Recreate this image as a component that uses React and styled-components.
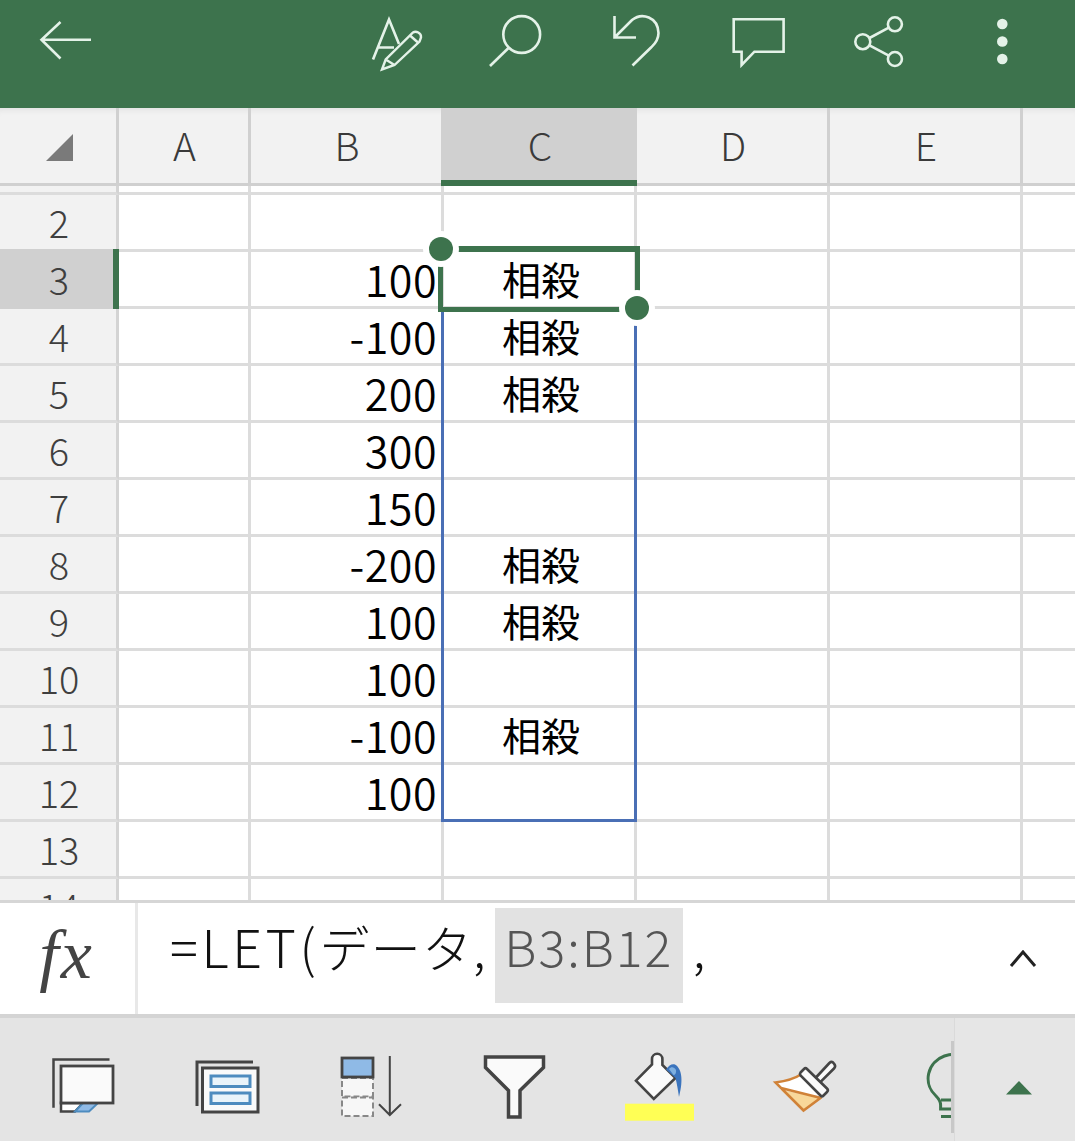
import React from "react";
import styled, { createGlobalStyle } from "styled-components";

const GREEN = "#3d734d";
const MINT = "#e4f2e8";
const INK = "#444";
const CJK = '"Noto Sans CJK JP", "Noto Sans", sans-serif';
const COLS = "119px 132px 193px 193px 193px 193px 52px";

const Global = createGlobalStyle`
  html, body { margin: 0; padding: 0; background: #fff; overflow: hidden; }
  * { box-sizing: border-box; }
`;
const Page = styled.div`
  width: 1075px; height: 1141px; display: flex; flex-direction: column;
  overflow: hidden; font-family: ${CJK};
`;
const TopBar = styled.header`
  height: 108px; flex: none; background: ${GREEN};
  display: flex; align-items: stretch; padding: 0 13px 0 6px;
`;
const TopGroup = styled.div`display: flex; margin-left: auto;`;
const TopIcon = styled.svg`
  display: block; width: 121px; height: 108px; flex: none;
  fill: none; stroke: ${MINT}; stroke-width: 2.6;
`;
const Sheet = styled.main`
  position: relative; flex: 1; min-height: 0; overflow: hidden; background: #fff;
`;
const HeaderRow = styled.div`
  display: grid; grid-template-columns: ${COLS}; height: 78px;
  background: #f2f2f2; box-shadow: inset 0 7px 6px -5px rgba(0,0,0,.07);
`;
const HeaderCell = styled.div`
  position: relative; display: flex; align-items: center; justify-content: center;
  padding: 0 0 4px 2px; font-size: 39px; font-weight: 300; color: #3a3a3a;
  border-bottom: 3px solid #d0d0d0;
  border-right: ${(p) => (p.$last ? "none" : "3px solid #d0d0d0")};
  background: ${(p) => (p.$active ? "#d0d0d0" : "transparent")};
  &::after {
    content: ""; display: ${(p) => (p.$active ? "block" : "none")};
    position: absolute; left: -3px; right: -3px; bottom: -3px; height: 6px; background: ${GREEN};
  }
`;
const Corner = styled.svg`display: block; width: 28px; height: 28px; margin: 8px 0 0 2px;`;
const Row = styled.div`
  display: grid; grid-template-columns: ${COLS}; height: ${(p) => (p.$sliver ? "9px" : "57px")};
`;
const RowHead = styled.div`
  position: relative; display: flex; align-items: center; justify-content: center;
  padding: 0 0 0 2px; font-size: 38px; font-weight: 300; color: #3f3f3f; line-height: 1;
  background: ${(p) => (p.$active ? "#d0d0d0" : "#f2f2f2")};
  border-right: 3px solid #d4d4d4;
  border-bottom: 3px solid ${(p) => (p.$active ? "#d0d0d0" : "#dcdcdc")};
  ${(p) => p.$active && `
    box-shadow: 0 -3px 0 #d0d0d0;
    &::after { content: ""; position: absolute; right: -3px; top: -3px; bottom: -3px; width: 6px; background: ${GREEN}; }
  `}
`;
const Cell = styled.div`
  display: flex; align-items: center; padding-bottom: 2px; line-height: 1; color: #000;
  justify-content: ${(p) => (p.$center ? "center" : "flex-end")};
  padding-right: ${(p) => (p.$center ? "0" : "4px")};
  padding-left: ${(p) => (p.$center ? "4px" : "0")};
  font-size: ${(p) => (p.$center ? "39px" : "43px")};
  letter-spacing: ${(p) => (p.$center ? "0" : "0.5px")};
  font-weight: ${(p) => (p.$center ? 400 : 350)};
  border-bottom: 3px solid #dcdcdc;
  border-right: ${(p) => (p.$last ? "none" : "3px solid #dcdcdc")};
`;
const RangeBox = styled.div`
  position: absolute; left: 441px; top: 199px; width: 196px; height: 515px;
  border: 3px solid #4a6fb5; border-top: none;
`;
const ActiveBox = styled.div`
  position: absolute; left: 438px; top: 138px; width: 202px; height: 66px;
  border: 5px solid ${GREEN}; border-top-width: 6px;
`;
const Handle = styled.div`
  position: absolute; left: ${(p) => p.$x}px; top: ${(p) => p.$y}px; width: 24px; height: 24px;
  border-radius: 50%; background: ${GREEN}; box-shadow: 0 0 0 6px #fff;
`;
const FormulaBar = styled.section`
  height: 118px; flex: none; display: flex; background: #fff;
  border-top: 3px solid #d6d6d6; border-bottom: 4px solid #d4d4d4;
`;
const FxBox = styled.div`
  width: 138px; flex: none; display: flex; align-items: center; justify-content: center;
  border-right: 3px solid #e8e8e8; padding: 0 2px 8px 0;
  font-family: "Liberation Serif", serif; font-style: italic; font-size: 70px; color: #444;
  line-height: 1; letter-spacing: 2px;
`;
const Formula = styled.div`
  flex: 1; display: flex; align-items: center; padding-left: 32px;
  font-size: 50px; font-weight: 300; color: #111; white-space: pre;
`;
const Run = styled.span`
  line-height: 1; margin-top: -25px; letter-spacing: ${(p) => p.$spacing || 0}px;
  font-size: ${(p) => p.$size || 50}px;
`;
const Ref = styled.span`
  display: flex; align-items: center; justify-content: center; width: 188px; height: 95px;
  margin: -6px 10px 0 8px; padding-bottom: 22px; line-height: 1;
  background: #e2e2e2; color: #555; letter-spacing: 2px;
`;
const Chevron = styled.svg`
  display: block; width: 28px; height: 18px; flex: none; margin: 0 38px 0 auto;
  fill: none; stroke: #222; stroke-width: 3;
`;
const ToolBar = styled.footer`
  height: 123px; flex: none; display: flex; background: #e4e4e4;
`;
const Tools = styled.div`
  width: 954px; flex: none; display: flex; overflow: hidden; padding-left: 12px; position: relative;
`;
const ToolIcon = styled.svg`display: block; width: 144px; height: 123px; flex: none;`;
const ScrollThumb = styled.div`
  position: absolute; right: 0; top: 23px; bottom: 8px; width: 3px; background: #c8c8c8;
`;
const Expand = styled.div`
  flex: 1; display: flex; align-items: center; justify-content: center; padding: 16px 0 0 7px;
  border-left: 1px solid #dadada; background: #e6e6e6;
`;
const ExpandArrow = styled.svg`display: block; width: 26px; height: 14px; fill: ${GREEN};`;

const slot = (x, y, w, h) => `${x} ${y} ${w} ${h}`;

const rows = [
  [2, "", false], [3, "100", true], [4, "-100", true], [5, "200", true], [6, "300", false],
  [7, "150", false], [8, "-200", true], [9, "100", true], [10, "100", false], [11, "-100", true],
  [12, "100", false], [13, "", false], [14, "", false],
];
const LETTERS = ["A", "B", "C", "D", "E", ""];
const FAT = { stroke: INK, strokeWidth: 3, fill: "#fafafa" };

export default function App() {
  return (
    <Page>
      <Global />
      <TopBar>
        <TopIcon viewBox={slot(6, 0, 121, 108)}>
          <path d="M41 39.7h50M60.5 22 41.5 39.7 60.5 58.5" />
        </TopIcon>
        <TopGroup>
          <TopIcon viewBox={slot(336, 0, 121, 108)}>
            <path d="M373 59.5 389 19.5 399 44M378 47.5h16" />
            <path d="M382 69.5 385.7 59.5 413 32.5C416 30.5 421.5 33 421 37.5L419.5 41.5 394.5 65ZM385.7 59.5 394.5 65M410 35.5 418.5 43" strokeWidth="2.4" />
          </TopIcon>
          <TopIcon viewBox={slot(457, 0, 121, 108)}>
            <circle cx="521.7" cy="34.5" r="18.4" />
            <path d="M490 66 508.5 48" />
          </TopIcon>
          <TopIcon viewBox={slot(578, 0, 121, 108)}>
            <path d="M614.5 16v21.5h21.5M614.5 37.5 632 20C642 12 658 17 658.5 33 658.5 41 654 44.500 651 47.500L632.500 65.500" />
          </TopIcon>
          <TopIcon viewBox={slot(699, 0, 121, 108)}>
            <path d="M733.700 19.300H783.600V51.700H754.400L741.600 65V51.700H733.700Z" />
          </TopIcon>
          <TopIcon viewBox={slot(820, 0, 121, 108)}>
            <circle cx="894.900" cy="24.300" r="7" />
            <circle cx="862.800" cy="41.700" r="7.500" />
            <circle cx="894.900" cy="59" r="7" />
            <path d="M869.500 38 888.800 27.600M869.500 45.300 888.800 55.700" />
          </TopIcon>
          <TopIcon viewBox={slot(941, 0, 121, 108)}>
            <g fill={MINT} stroke="none">
              <circle cx="1002.300" cy="24" r="5.300" />
              <circle cx="1002.300" cy="41.500" r="5.300" />
              <circle cx="1002.300" cy="59" r="5.300" />
            </g>
          </TopIcon>
        </TopGroup>
      </TopBar>

      <Sheet>
        <HeaderRow>
          <HeaderCell>
            <Corner viewBox="0 0 28 28"><path d="M0 27H27V0Z" fill="#7a7a7a" /></Corner>
          </HeaderCell>
          {LETTERS.map((l, i) => (
            <HeaderCell key={i} $active={l === "C"} $last={i === 5}>{l}</HeaderCell>
          ))}
        </HeaderRow>
        <Row $sliver>
          <RowHead />
          {LETTERS.map((l, i) => <Cell key={i} $last={i === 5} />)}
        </Row>
        {rows.map(([n, value, mark]) => (
          <Row key={n}>
            <RowHead $active={n === 3}>{n}</RowHead>
            <Cell />
            <Cell>{value}</Cell>
            <Cell $center>{mark ? "相殺" : ""}</Cell>
            <Cell />
            <Cell />
            <Cell $last />
          </Row>
        ))}
        <RangeBox />
        <ActiveBox />
        <Handle $x={429} $y={129} />
        <Handle $x={625} $y={188} />
      </Sheet>

      <FormulaBar>
        <FxBox>fx</FxBox>
        <Formula>
          <Run $spacing={3.6} $size={52}>=LET(</Run>
          <Run $spacing={1.2}>データ,</Run>
          <Ref>B3:B12</Ref>
          <Run>,</Run>
          <Chevron viewBox="0 0 28 18"><path d="M2 16 14 2 26 16" /></Chevron>
        </Formula>
      </FormulaBar>

      <ToolBar>
        <Tools>
          <ToolIcon viewBox={slot(12, 1018, 144, 123)} fill="none">
            <path d="M53.500 1107.700V1059.500H109.500" stroke={INK} strokeWidth="2.500" />
            <path d="M61 1102.700V1111.500H75L83 1103Z" fill="#fff" stroke={INK} strokeWidth="2.500" />
            <path d="M83 1103H98L89 1111.500H75Z" fill="#8fbae6" stroke="#4e8cbf" strokeWidth="2" />
            <rect x="61" y="1066" width="52" height="37" fill="#fafafa" stroke={INK} strokeWidth="2.800" />
          </ToolIcon>
          <ToolIcon viewBox={slot(156, 1018, 144, 123)} fill="none">
            <path d="M197 1106V1062H253" stroke={INK} strokeWidth="3" />
            <rect x="202.500" y="1068" width="55.500" height="44" {...FAT} />
            <rect x="211" y="1076" width="39" height="10.500" fill="#eaf4fa" stroke="#4e8cbf" strokeWidth="3" />
            <rect x="211" y="1093" width="39" height="10.500" fill="#eaf4fa" stroke="#4e8cbf" strokeWidth="3" />
          </ToolIcon>
          <ToolIcon viewBox={slot(300, 1018, 144, 123)} fill="none">
            <rect x="342" y="1078" width="31" height="18.500" fill="#f7f7f7" stroke="#888" strokeWidth="2" strokeDasharray="6 3" />
            <rect x="342" y="1097.500" width="31" height="18.500" fill="#f7f7f7" stroke="#888" strokeWidth="2" strokeDasharray="6 3" />
            <rect x="342" y="1058" width="31" height="19" fill="#8fbae6" stroke={INK} strokeWidth="2.800" />
            <path d="M389.800 1056V1115M379 1104.300 389.800 1115 401 1104.300" stroke={INK} strokeWidth="2" />
          </ToolIcon>
          <ToolIcon viewBox={slot(444, 1018, 144, 123)} fill="none">
            <path d="M485.500 1057H543.500V1067.500L520 1090.500V1117H508.500V1090.500L485.500 1067.500Z" fill="#fafafa" stroke={INK} strokeWidth="3.500" />
          </ToolIcon>
          <ToolIcon viewBox={slot(588, 1018, 144, 123)} fill="none">
            <rect x="625" y="1103.700" width="69" height="17" fill="#ffff55" />
            <path d="M636 1080.700 652 1064.500V1059A5.200 5.200 0 0 1 662.400 1059V1065L675.500 1078 653.800 1099Z" {...FAT} strokeWidth="2.600" />
            <path d="M666 1069.500C669 1065 672 1063.500 675 1064.500 681 1068 684 1078 679 1097 678 1090 677 1084 675.500 1078Z" fill="#3b74bd" />
            <path d="M669 1069C671 1066.500 674 1066.500 676 1070 676.500 1073 675 1075 673.500 1075Z" fill="#7fb0e0" />
          </ToolIcon>
          <ToolIcon viewBox={slot(732, 1018, 144, 123)} fill="none">
            <path d="M775.500 1082.500C786 1081 794 1079 800 1074.500L822 1096.500 781 1090Z" fill="#fff" />
            <path d="M781 1090 821.500 1098 803.500 1111Z" fill="#f8d89a" />
            <path d="M800 1075C794 1079 786 1081 775.500 1082.500L803.500 1110.500 821.500 1097.300M781 1088 821 1098" stroke="#d08238" strokeWidth="2.600" />
            <path d="M815.500 1078 829.400 1063C831 1061.500 832.500 1061.500 833.500 1063L834.600 1064.500C835.500 1066 835.500 1067 834 1068.500L820.800 1081.700" {...FAT} strokeWidth="2.600" />
            <path d="M800.500 1072.500 804 1069C805 1068 806 1068 807 1069L827 1088.500C828 1089.500 828 1091 827 1092L823.500 1095.500C822.500 1096.500 821.500 1096.500 820.500 1095.500L800.500 1075.500C799.700 1074.500 799.700 1073.500 800.500 1072.500Z" {...FAT} strokeWidth="2.600" />
          </ToolIcon>
          <ToolIcon viewBox={slot(876, 1018, 144, 123)} fill="none">
            <path d="M978 1081A25 24 0 1 0 936 1096C939 1099 940.600 1102 940.600 1105V1109H966M941 1100H966M941 1116.500H966" stroke={GREEN} strokeWidth="3" />
          </ToolIcon>
          <ScrollThumb />
        </Tools>
        <Expand>
          <ExpandArrow viewBox="0 0 26 14"><path d="M0 13.500 13 0 26 13.500Z" /></ExpandArrow>
        </Expand>
      </ToolBar>
    </Page>
  );
}
